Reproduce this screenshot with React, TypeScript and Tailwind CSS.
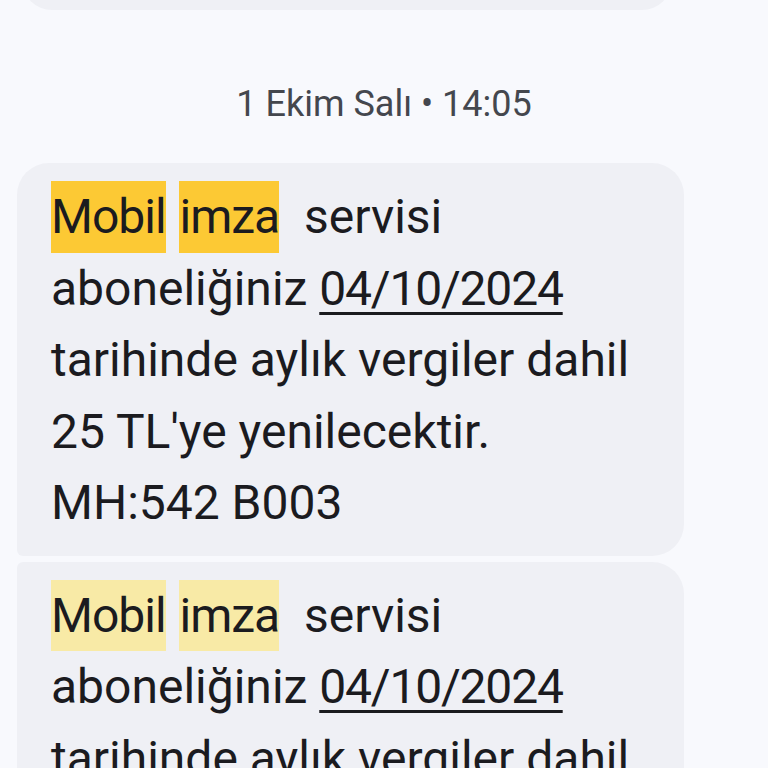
const font = { fontFamily: "Roboto, 'Noto Sans', sans-serif" };

function Mark({ children, tone }: { children: string; tone: "strong" | "soft" }) {
  return (
    <span
      className={`inline-block tracking-[-1px] ${tone === "strong" ? "bg-[#fcc934]" : "bg-[#f8eaa6]"}`}
    >
      {children}
    </span>
  );
}

function Message({ tone, corners }: { tone: "strong" | "soft"; corners: string }) {
  return (
    <div className={`bg-[#eff0f5] pl-[34px] pr-6 pt-[18px] pb-[17px] ${corners}`}>
      <div className="text-[48px] leading-[71.5px] text-[#1b1b1f] whitespace-pre" style={font}>
        <div>
          <Mark tone={tone}>Mobil</Mark>
          <span className="tracking-[2px]"> </span>
          <Mark tone={tone}>imza</Mark>
          <span className="tracking-[0.5px]">{"  "}</span>servisi
        </div>
        <div>
          aboneliğiniz{" "}
          <span className="underline decoration-[3px] underline-offset-[7px] tracking-[-1.2px]">
            04/10/2024
          </span>
        </div>
        <div>tarihinde aylık vergiler dahil</div>
        <div>25 TL'ye yenilecektir.</div>
        <div>MH:542 B003</div>
      </div>
    </div>
  );
}

export default function App() {
  return (
    <div className="h-[768px] overflow-hidden bg-[#f8f9fd]">
      <div className="-mt-[60px]">
        <div className="pl-[22px] pr-[96px]">
          <div className="h-[70px] rounded-[30px] bg-[#eff0f5]" />
        </div>
        <div
          className="h-[153px] flex items-end justify-center pb-[37px] text-[36px] leading-[44px] text-[#44474e]"
          style={font}
        >
          1 Ekim Salı • 14:05
        </div>
        <div className="flex flex-col gap-[6px] pl-[17px] pr-[84px]">
          <Message tone="strong" corners="rounded-[32px] rounded-bl-[6px]" />
          <Message tone="soft" corners="rounded-[32px] rounded-tl-[6px]" />
        </div>
      </div>
    </div>
  );
}
